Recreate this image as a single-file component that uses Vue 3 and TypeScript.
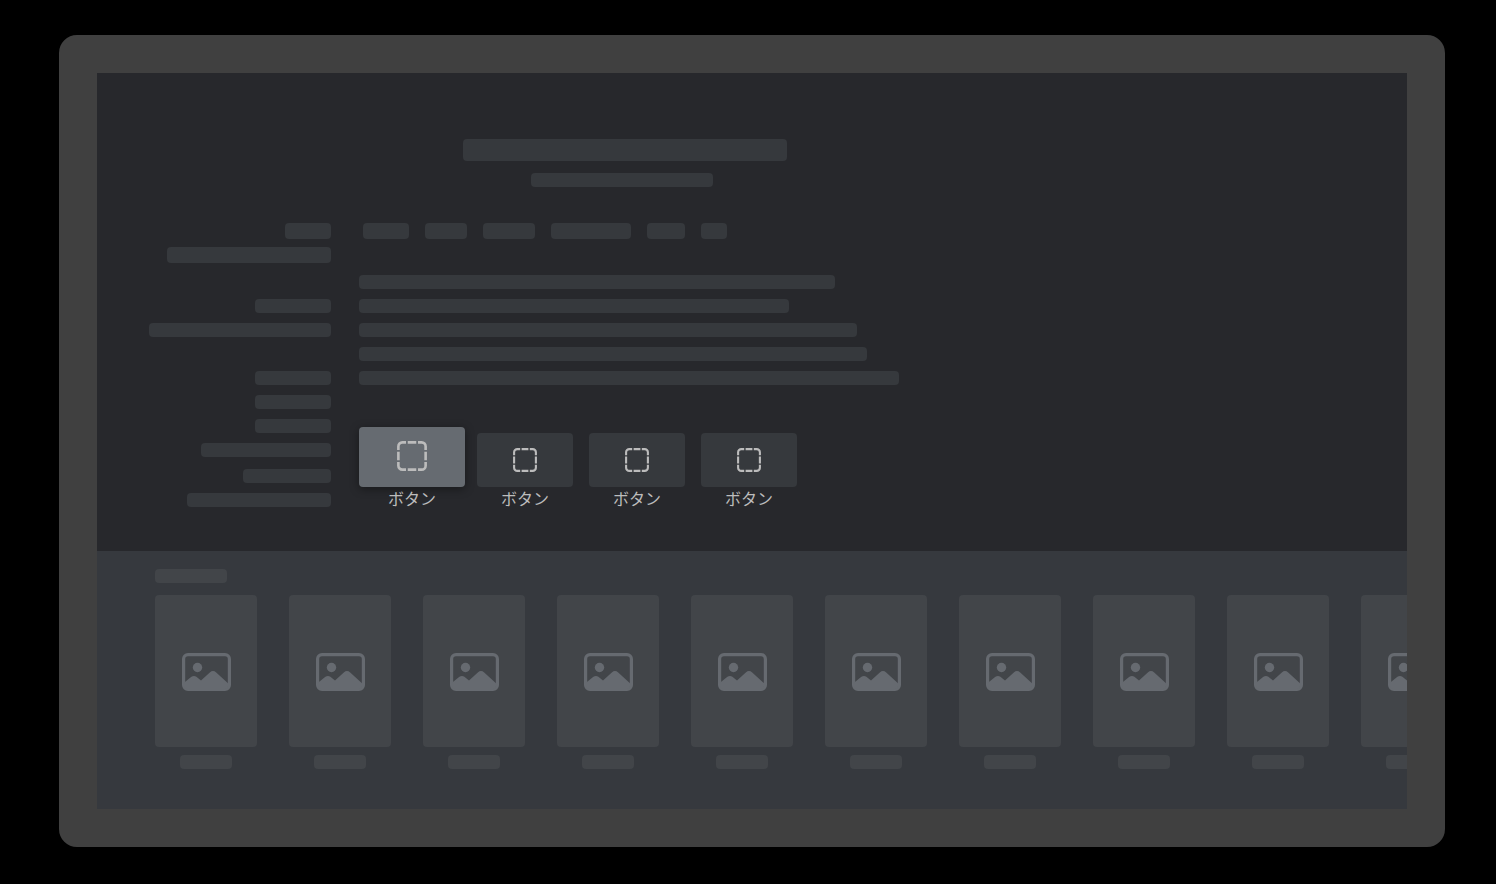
<script setup lang="ts">
interface Action {
  id: number
  label: string
  focused: boolean
}

const sideGroups: { name: string; widths: number[] }[] = [
  { name: 'lead', widths: [46, 164] },
  { name: 'people', widths: [76, 182] },
  { name: 'credits', widths: [76, 76, 76, 130] },
  { name: 'extra', widths: [88, 144] },
]
const tagWidths: number[] = [46, 42, 52, 80, 38, 26]
const lineWidths: number[] = [476, 430, 498, 508, 540]
const actions: Action[] = [1, 2, 3, 4].map((id) => ({
  id,
  label: 'ボタン',
  focused: id === 1,
}))
const cardCount = 10
</script>

<template>
  <div class="page">
    <main class="device">
      <section class="hero">
        <div class="heading">
          <div class="bar title"></div>
          <div class="bar subtitle"></div>
        </div>

        <div class="details">
          <aside class="side">
            <div v-for="group in sideGroups" :key="group.name" class="group" :class="group.name">
              <div v-for="(w, i) in group.widths" :key="i" class="bar" :style="{ width: w + 'px' }"></div>
            </div>
          </aside>

          <div class="content">
            <div class="tags">
              <div v-for="(w, i) in tagWidths" :key="i" class="bar tag" :style="{ width: w + 'px' }"></div>
            </div>
            <div class="lines">
              <div v-for="(w, i) in lineWidths" :key="i" class="bar" :style="{ width: w + 'px' }"></div>
            </div>
            <div class="actions">
              <button
                v-for="action in actions"
                :key="action.id"
                type="button"
                class="action"
                :class="{ focused: action.focused }"
              >
                <span class="face">
                  <svg class="dashed" viewBox="0 0 24 24" aria-hidden="true">
                    <path
                      d="M1.1 7.2V4.3A3.2 3.2 0 0 1 4.3 1.1H7.2M8.6 1.1H15.4M16.8 1.1H19.7A3.2 3.2 0 0 1 22.9 4.3V7.2M22.9 8.6V15.4M22.9 16.8V19.7A3.2 3.2 0 0 1 19.7 22.9H16.8M15.4 22.9H8.6M7.2 22.9H4.3A3.2 3.2 0 0 1 1.1 19.7V16.8M1.1 15.4V8.6"
                      fill="none"
                      stroke="currentColor"
                      stroke-width="2.1"
                    />
                  </svg>
                </span>
                <span class="label">{{ action.label }}</span>
              </button>
            </div>
          </div>
        </div>
      </section>

      <section class="shelf">
        <div class="bar shelf-title"></div>
        <ul class="cards">
          <li v-for="n in cardCount" :key="n" class="card">
            <div class="poster">
              <svg class="picture" viewBox="0 0 50 38" aria-hidden="true">
                <rect x="2.6" y="1.6" width="45.8" height="34.8" rx="4.4" fill="none" stroke="currentColor" stroke-width="3.2" />
                <circle cx="16.5" cy="14.5" r="4.7" fill="currentColor" />
                <path
                  d="M3 29.8L10.4 23.8Q13 22 15.4 23.8L20 27.6L28.8 19.4Q32 16.8 35.2 19.4L47 30.2V33Q47 36 44 36H6Q3 36 3 33Z"
                  fill="currentColor"
                />
              </svg>
            </div>
            <div class="bar caption"></div>
          </li>
        </ul>
      </section>
    </main>
  </div>
</template>

<style>
html,
body {
  background: #000;
}
</style>

<style scoped>
.page {
  box-sizing: border-box;
  padding: 35px 51px 37px 59px;
  font-family: "Liberation Sans", "Noto Sans CJK JP", sans-serif;
}

.device {
  border: 38px solid #404040;
  border-radius: 18px;
  overflow: hidden;
}

.bar {
  height: 14px;
  border-radius: 4px;
  background: #36393d;
}

.hero {
  padding: 66px 0 38px;
  background: #27282c;
}

.heading {
  display: flex;
  flex-direction: column;
  gap: 12px;
  margin-bottom: 36px;
}

.title {
  width: 324px;
  height: 22px;
  margin-left: 366px;
}

.subtitle {
  width: 182px;
  margin-left: 434px;
}

.details {
  display: grid;
  grid-template-columns: 234px 1fr;
  gap: 28px;
}

.group {
  display: flex;
  flex-direction: column;
  align-items: flex-end;
  gap: 10px;
}

.lead {
  gap: 8px;
  margin-bottom: 36px;
}

.lead .bar,
.tag {
  height: 16px;
}

.people {
  margin-bottom: 34px;
}

.credits {
  margin-bottom: 12px;
}

.tags {
  display: flex;
  gap: 16px;
  padding-left: 4px;
  margin-bottom: 36px;
}

.lines {
  display: flex;
  flex-direction: column;
  gap: 10px;
  margin-bottom: 42px;
}

.actions {
  display: flex;
  align-items: flex-end;
  gap: 16px;
}

.action {
  display: flex;
  flex-direction: column;
  width: 96px;
  padding: 0;
  border: 0;
  background: none;
  color: #bcbcbc;
  font: inherit;
}

.face {
  display: flex;
  align-items: center;
  justify-content: center;
  box-sizing: border-box;
  height: 54px;
  border-radius: 4px;
  background: #36393d;
}

.dashed {
  width: 24px;
  height: 24px;
}

.label {
  font-size: 16px;
  line-height: 26px;
  text-align: center;
}

.focused {
  width: 106px;
  margin-right: -4px;
}

.focused .face {
  height: 60px;
  padding-bottom: 2px;
  background: #666b71;
  box-shadow: 0 2px 10px rgba(0, 0, 0, 0.4);
}

.focused .dashed {
  width: 30px;
  height: 30px;
}

.shelf {
  padding: 18px 0 40px 58px;
  background: #36393e;
}

.shelf .bar {
  background: #424549;
}

.shelf-title {
  width: 72px;
  margin-bottom: 12px;
}

.cards {
  display: flex;
  gap: 32px;
  margin: 0;
  padding: 0;
  list-style: none;
  overflow: hidden;
}

.card {
  display: flex;
  flex: none;
  flex-direction: column;
  align-items: center;
  gap: 8px;
  width: 102px;
}

.poster {
  display: flex;
  align-items: center;
  justify-content: center;
  box-sizing: border-box;
  width: 100%;
  height: 152px;
  padding-top: 2px;
  border-radius: 4px;
  background: #424549;
  color: #666a70;
}

.picture {
  width: 50px;
  height: 38px;
}

.caption {
  width: 52px;
}
</style>
